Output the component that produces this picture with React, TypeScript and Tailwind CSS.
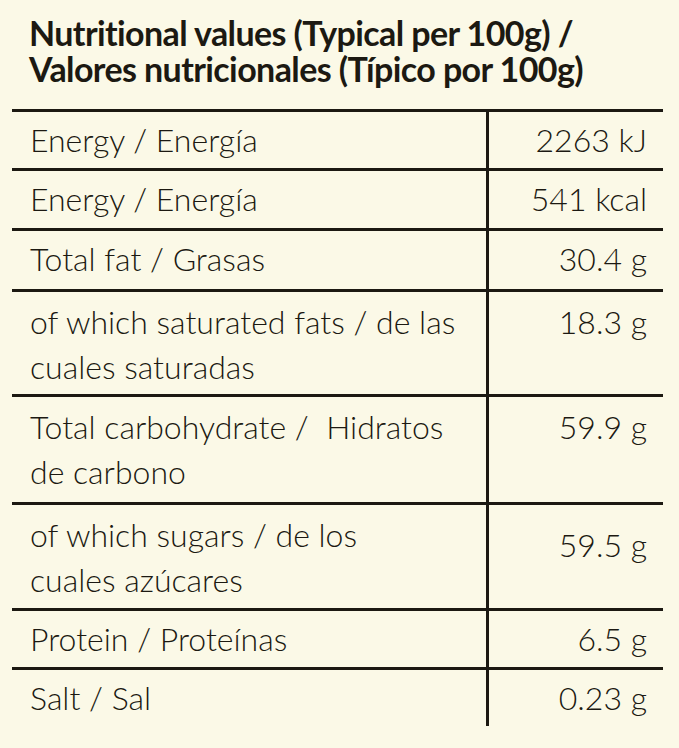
import React from "react";

type Row = { label: string[]; value: string; h: string; pt: string; vpt: string };

const rows: Row[] = [
  { label: ["Energy / Energía"], value: "2263 kJ", h: "h-[59px]", pt: "pt-[5px]", vpt: "pt-[5px]" },
  { label: ["Energy / Energía"], value: "541 kcal", h: "h-[60px]", pt: "pt-[5px]", vpt: "pt-[5px]" },
  { label: ["Total fat / Grasas"], value: "30.4 g", h: "h-[61px]", pt: "pt-[5px]", vpt: "pt-[5px]" },
  { label: ["of which saturated fats / de las", "cuales saturadas"], value: "18.3 g", h: "h-[105px]", pt: "pt-[7px]", vpt: "pt-[7px]" },
  { label: ["Total carbohydrate /  Hidratos", "de carbono"], value: "59.9 g", h: "h-[108px]", pt: "pt-[7px]", vpt: "pt-[7px]" },
  { label: ["of which sugars / de los", "cuales azúcares"], value: "59.5 g", h: "h-[106px]", pt: "pt-[7px]", vpt: "pt-[17px]" },
  { label: ["Protein / Proteínas"], value: "6.5 g", h: "h-[59px]", pt: "pt-[5px]", vpt: "pt-[5px]" },
  { label: ["Salt / Sal"], value: "0.23 g", h: "h-[59px]", pt: "pt-[5px]", vpt: "pt-[5px]" },
];

export default function App() {
  return (
    <div className="w-[679px] h-[748px] bg-[#fbf9e7] text-[#1c1912] overflow-hidden font-['Lato','Noto_Sans',sans-serif]">
      <div className="pl-[29px] pt-[15px] h-[109px] text-[34px] leading-[36px] font-bold tracking-[-0.6px]">
        <div>Nutritional values (Typical per 100g) /</div>
        <div>Valores nutricionales (Típico por 100g)</div>
      </div>
      <div className="ml-[12px] w-[651px] flex flex-col">
        {rows.map((r, i) => (
          <div key={i} className={`flex ${r.h}`}>
            <div className={`w-[474px] border-t-[3px] border-[#1c1912] pl-[18px] text-[32px] leading-[45px] font-light whitespace-pre ${r.pt}`}>
              {r.label.map((l, j) => (
                <div key={j}>{l}</div>
              ))}
            </div>
            <div className="w-[3px] bg-[#1c1912]" />
            <div className={`flex-1 border-t-[3px] border-[#1c1912] pr-[16px] text-right text-[32px] leading-[45px] font-light ${r.vpt}`}>
              {r.value}
            </div>
          </div>
        ))}
      </div>
    </div>
  );
}
